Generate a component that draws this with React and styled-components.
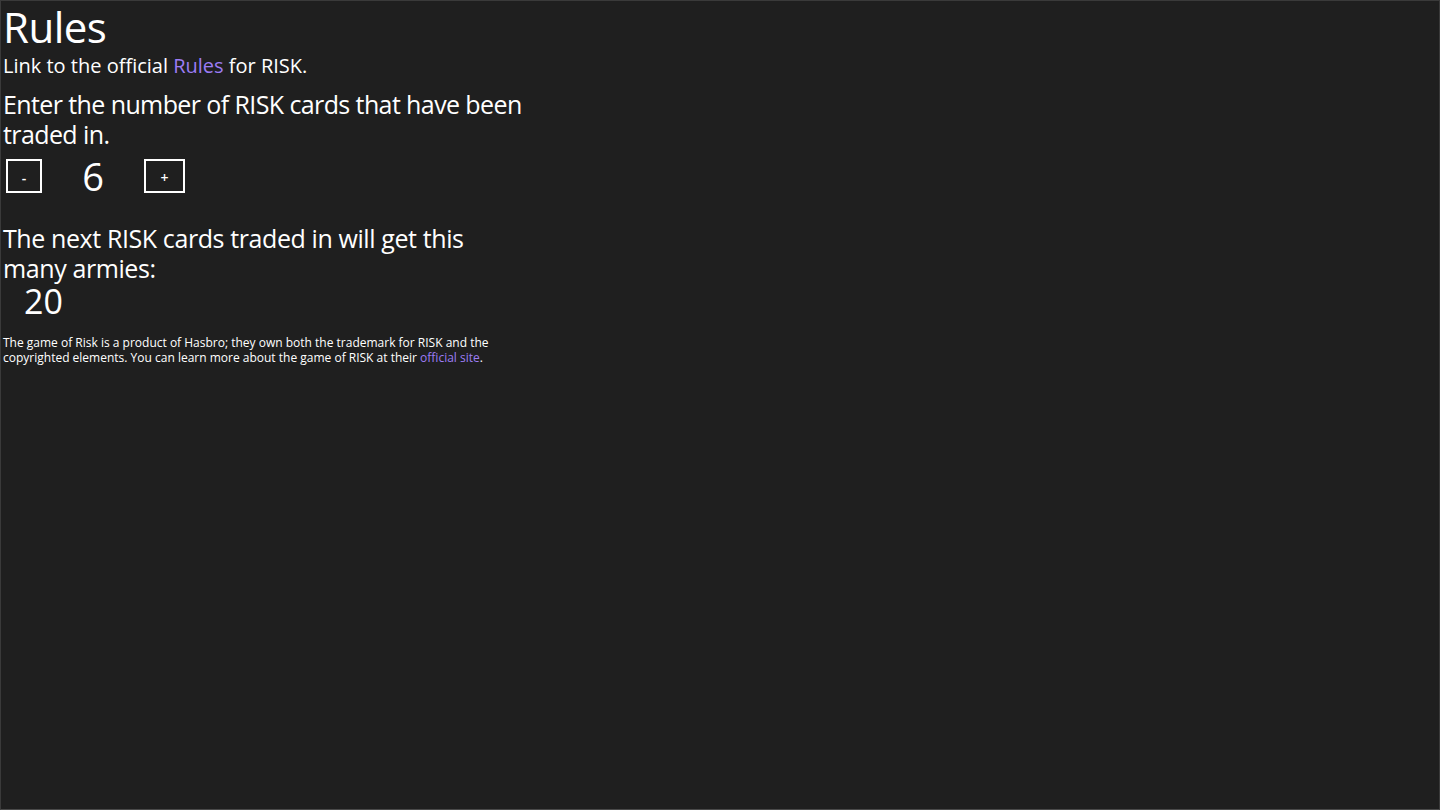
import React, { useState } from "react";
import styled, { createGlobalStyle } from "styled-components";

const Global = createGlobalStyle`
  html, body { margin: 0; padding: 0; background: #1f1f1f; }
  body { font-family: "Open Sans", "Noto Sans", sans-serif; color: #ffffff; }
  * { box-sizing: border-box; }
`;

const Frame = styled.div`
  width: 1440px;
  height: 810px;
  background: #1f1f1f;
  border: 1px solid #3a3a3a;
  border-bottom-color: #4a4a4a;
`;

const Panel = styled.main`
  width: 530px;
  padding: 0 0 0 2px;
  display: flex;
  flex-direction: column;
`;

const Title = styled.h1`
  margin: 0;
  font-size: 42px;
  font-weight: 400;
  line-height: 52px;
  letter-spacing: -0.5px;
`;

const Lead = styled.p`
  margin: 0;
  font-size: 20px;
  line-height: 26px;
  letter-spacing: 0;
`;

const Link = styled.a`
  color: #9c7cf4;
  text-decoration: none;
`;

const Heading = styled.h2`
  margin: ${(p) => p.$top}px 0 0;
  max-width: ${(p) => p.$max || 528}px;
  font-size: 25px;
  font-weight: 400;
  line-height: 30px;
  letter-spacing: ${(p) => p.$ls ?? -0.6}px;
`;

const Counter = styled.div`
  display: flex;
  align-items: center;
  margin: 10px 0 0 3px;
  height: 34px;
`;

const StepButton = styled.button`
  width: ${(p) => p.$w}px;
  height: 34px;
  background: transparent;
  border: 2px solid #ffffff;
  color: #ffffff;
  font-family: "Open Sans", sans-serif;
  font-size: 14px;
  font-weight: 600;
  padding: 2px 0 0;
  display: flex;
  align-items: center;
  justify-content: center;
  cursor: pointer;
`;

const Count = styled.span`
  width: 102px;
  text-align: center;
  font-size: 38px;
  line-height: 34px;
`;

const Result = styled.div`
  margin: 0 0 0 21px;
  font-size: 34px;
  line-height: 36px;
`;

const Footer = styled.p`
  margin: 16px 0 0;
  font-size: 12px;
  line-height: 15px;
  letter-spacing: 0;
  width: 500px;
`;

export default function App() {
  const [n, setN] = useState(6);
  const armies = (k) => {
    const table = [4, 6, 8, 10, 12, 15];
    return k < 6 ? table[k] : 15 + (k - 5) * 5;
  };
  return (
    <>
      <Global />
      <Frame>
        <Panel>
          <Title>Rules</Title>
          <Lead>
            Link to the official <Link href="#">Rules</Link> for RISK.
          </Lead>
          <Heading $top={10}>Enter the number of RISK cards that have been traded in.</Heading>
          <Counter>
            <StepButton $w={36} onClick={() => setN(Math.max(0, n - 1))}>-</StepButton>
            <Count>{n}</Count>
            <StepButton $w={41} onClick={() => setN(n + 1)}>+</StepButton>
          </Counter>
          <Heading as="h3" $top={30} $max={500} $ls={-0.4}>
            The next RISK cards traded in will get this many armies:
          </Heading>
          <Result>{armies(n)}</Result>
          <Footer>
            The game of Risk is a product of Hasbro; they own both the trademark for RISK and the
            copyrighted elements. You can learn more about the game of RISK at their{" "}
            <Link href="#">official site</Link>.
          </Footer>
        </Panel>
      </Frame>
    </>
  );
}
